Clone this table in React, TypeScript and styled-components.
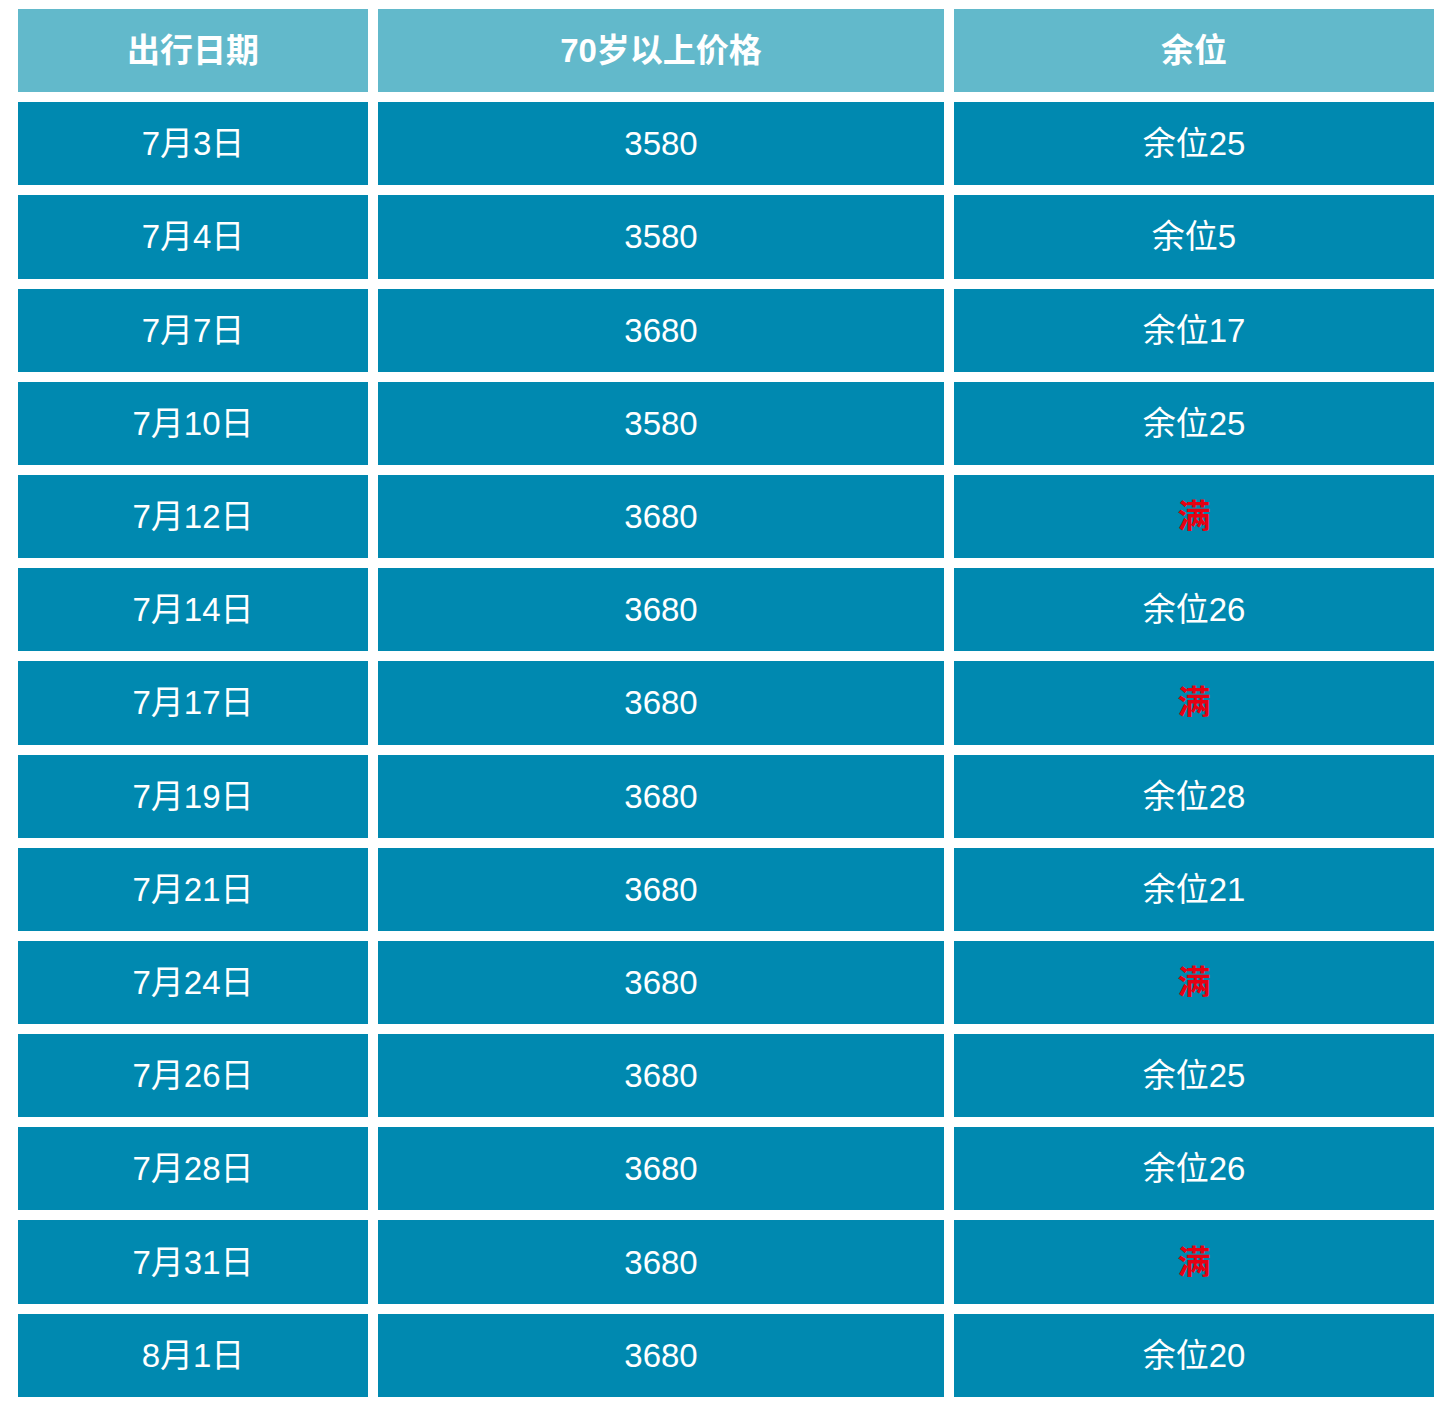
import React from 'react';
import styled, { createGlobalStyle } from 'styled-components';

const GlobalStyle = createGlobalStyle`
  body {
    margin: 0;
    background: #ffffff;
    font-family: "Liberation Sans", Arial, "Noto Sans CJK SC", sans-serif;
  }
`;

const Table = styled.div`
  display: grid;
  grid-template-columns: 350px 566px 480px;
  grid-auto-rows: 83.2px;
  gap: 10px;
  padding: 9px 0 0 18px;
`;

const Cell = styled.div<{ $head?: boolean }>`
  display: flex;
  align-items: center;
  justify-content: center;
  background: ${({ $head }) => ($head ? '#62b9cb' : '#0089b0')};
  color: #ffffff;
  font-size: 33px;
  line-height: 1;
  font-weight: ${({ $head }) => ($head ? 700 : 400)};
`;

const Label = styled.span`
  display: block;
  line-height: 33px;
  height: 33px;
`;

const Full = styled.span`
  color: #e60012;
  font-weight: 700;
`;

interface Row {
  date: string;
  price: string;
  seats: number | null;
}

const rows: Row[] = [
  { date: '7月3日', price: '3580', seats: 25 },
  { date: '7月4日', price: '3580', seats: 5 },
  { date: '7月7日', price: '3680', seats: 17 },
  { date: '7月10日', price: '3580', seats: 25 },
  { date: '7月12日', price: '3680', seats: null },
  { date: '7月14日', price: '3680', seats: 26 },
  { date: '7月17日', price: '3680', seats: null },
  { date: '7月19日', price: '3680', seats: 28 },
  { date: '7月21日', price: '3680', seats: 21 },
  { date: '7月24日', price: '3680', seats: null },
  { date: '7月26日', price: '3680', seats: 25 },
  { date: '7月28日', price: '3680', seats: 26 },
  { date: '7月31日', price: '3680', seats: null },
  { date: '8月1日', price: '3680', seats: 20 },
];

const App: React.FC = () => {
  return (
    <>
      <GlobalStyle />
      <Table>
        <Cell $head><Label>出行日期</Label></Cell>
        <Cell $head><Label>70岁以上价格</Label></Cell>
        <Cell $head><Label>余位</Label></Cell>
        {rows.map((r) => (
          <React.Fragment key={r.date}>
            <Cell><Label>{r.date}</Label></Cell>
            <Cell><Label>{r.price}</Label></Cell>
            <Cell>
              <Label>{r.seats === null ? <Full>满</Full> : `余位${r.seats}`}</Label>
            </Cell>
          </React.Fragment>
        ))}
      </Table>
    </>
  );
};

export default App;
